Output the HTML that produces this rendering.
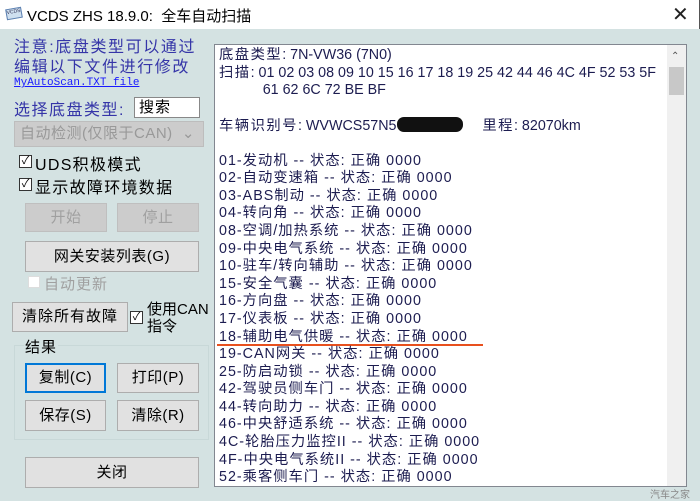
<!DOCTYPE html>
<html><head><meta charset="utf-8"><style>
*{margin:0;padding:0;box-sizing:border-box}
body{width:700px;height:501px;overflow:hidden;background:#d4e2e2;font-family:"Liberation Sans","Noto Sans CJK SC",sans-serif;position:relative}
.a{position:absolute;white-space:nowrap}
#tb{left:0;top:0;width:700px;height:29px;background:#fff;border-right:1px solid #555}
.btn{position:absolute;background:#e1e1e1;border:1px solid #adadad;font-size:15px;color:#000;text-align:center;letter-spacing:0.5px}
.dis{color:#a0a0a0;background:#cccccc;border-color:#bfbfbf}
.cb{position:absolute;width:13px;height:13px;border:1px solid #333;background:#fff;font-size:11px;line-height:11px;text-align:center}
#box{left:214px;top:44px;width:473px;height:443px;background:#fff;border:1px solid #828790}
#txt{position:absolute;left:4px;top:2px;font-size:14.3px;line-height:17.6px;color:#1c1c50}
#txt div{height:17.6px}
#txt .l{letter-spacing:1px}
.c{letter-spacing:1.5px}
</style></head><body>
<div id="tb" class="a"></div>
<div class="a" style="left:6px;top:8px;width:16px;height:11px;background:#cfe0f0;border:1px solid #5b7fb0;transform:rotate(-10deg);font-size:5px;color:#335">VCDS</div>
<div class="a" style="left:27px;top:5px;font-size:15px;color:#000">VCDS ZHS 18.9.0:&nbsp; 全车自动扫描</div>
<div class="a" style="left:672px;top:2px;font-size:20px;color:#222">✕</div>

<div class="a" style="left:14px;top:38px;font-size:16px;line-height:20px;color:#3535a8;letter-spacing:1.6px">注意:底盘类型可以通过<br>编辑以下文件进行修改</div>
<div class="a" style="left:14px;top:77px;font-size:11px;color:#1a1aff;text-decoration:underline;font-family:'Liberation Mono',monospace">MyAutoScan.TXT file</div>
<div class="a" style="left:14px;top:96px;font-size:16px;color:#3535a8;letter-spacing:1.5px">选择底盘类型:</div>
<div class="a" style="left:134px;top:97px;width:66px;height:21px;background:#fff;border:1px solid #888;font-size:15px;padding-left:4px;line-height:19px;letter-spacing:1px">搜索</div>
<div class="a" style="left:14px;top:121px;width:190px;height:26px;background:#cccccc;border:1px solid #bdbdbd;font-size:15px;color:#999;padding-left:5px;line-height:24px;letter-spacing:0.5px">自动检测(仅限于CAN)<span style="position:absolute;right:8px">⌄</span></div>
<div class="cb" style="left:19px;top:155px">✓</div><div class="a" style="left:35px;top:151px;font-size:16px;letter-spacing:1.3px">UDS积极模式</div>
<div class="cb" style="left:19px;top:178px">✓</div><div class="a" style="left:35px;top:174px;font-size:16px;letter-spacing:1.3px">显示故障环境数据</div>
<div class="btn dis" style="left:25px;top:203px;width:82px;height:29px;line-height:27px">开始</div>
<div class="btn dis" style="left:117px;top:203px;width:82px;height:29px;line-height:27px">停止</div>
<div class="btn" style="left:25px;top:241px;width:174px;height:31px;line-height:29px">网关安装列表(G)</div>
<div class="a" style="left:28px;top:276px;width:12px;height:12px;background:#fff;border:1px solid #ddd"></div>
<div class="a" style="left:44px;top:273px;font-size:15px;color:#a0a0a0;letter-spacing:1px">自动更新</div>
<div class="btn" style="left:12px;top:302px;width:116px;height:30px;line-height:28px;letter-spacing:1px">清除所有故障</div>
<div class="cb" style="left:130px;top:311px">✓</div>
<div class="a" style="left:147px;top:301px;font-size:15px;line-height:17px">使用CAN<br>指令</div>
<div class="a" style="left:14px;top:345px;width:195px;height:95px;border:1px solid #c8d8d8"></div>
<div class="a" style="left:24px;top:336px;font-size:15px;background:#d4e2e2;padding:0 1px;letter-spacing:1px">结果</div>
<div class="btn" style="left:25px;top:363px;width:81px;height:30px;line-height:26px;border:2px solid #0078d7">复制(C)</div>
<div class="btn" style="left:117px;top:363px;width:82px;height:30px;line-height:28px">打印(P)</div>
<div class="btn" style="left:25px;top:400px;width:81px;height:31px;line-height:29px">保存(S)</div>
<div class="btn" style="left:117px;top:400px;width:82px;height:31px;line-height:29px">清除(R)</div>
<div class="btn" style="left:25px;top:457px;width:174px;height:31px;line-height:29px">关闭</div>

<div id="box" class="a">
<div id="txt">
<div><span class="c">底盘类型</span>: 7N-VW36 (7N0)</div>
<div><span class="c">扫描</span>: 01 02 03 08 09 10 15 16 17 18 19 25 42 44 46 4C 4F 52 53 5F</div>
<div>&nbsp;&nbsp;&nbsp;&nbsp;&nbsp;&nbsp;&nbsp;&nbsp;&nbsp;&nbsp;&nbsp;61 62 6C 72 BE BF</div>
<div></div>
<div><span class="c">车辆识别号</span>: WVWCS57N5<span style="display:inline-block;width:66px;height:15px;background:#111;border-radius:7px;vertical-align:-2px"></span>&nbsp;&nbsp;&nbsp;&nbsp; <span class="c">里程</span>: 82070km</div>
<div></div>
<div class="l">01-发动机 -- 状态: 正确 0000</div>
<div class="l">02-自动变速箱 -- 状态: 正确 0000</div>
<div class="l">03-ABS制动 -- 状态: 正确 0000</div>
<div class="l">04-转向角 -- 状态: 正确 0000</div>
<div class="l">08-空调/加热系统 -- 状态: 正确 0000</div>
<div class="l">09-中央电气系统 -- 状态: 正确 0000</div>
<div class="l">10-驻车/转向辅助 -- 状态: 正确 0000</div>
<div class="l">15-安全气囊 -- 状态: 正确 0000</div>
<div class="l">16-方向盘 -- 状态: 正确 0000</div>
<div class="l">17-仪表板 -- 状态: 正确 0000</div>
<div class="l" style="border-bottom:2px solid #e8501e;width:266px;margin-left:-2px;padding-left:2px">18-辅助电气供暖 -- 状态: 正确 0000</div>
<div class="l">19-CAN网关 -- 状态: 正确 0000</div>
<div class="l">25-防启动锁 -- 状态: 正确 0000</div>
<div class="l">42-驾驶员侧车门 -- 状态: 正确 0000</div>
<div class="l">44-转向助力 -- 状态: 正确 0000</div>
<div class="l">46-中央舒适系统 -- 状态: 正确 0000</div>
<div class="l">4C-轮胎压力监控II -- 状态: 正确 0000</div>
<div class="l">4F-中央电气系统II -- 状态: 正确 0000</div>
<div class="l">52-乘客侧车门 -- 状态: 正确 0000</div>
</div>
<div class="a" style="left:452px;top:0;width:19px;height:441px;background:#f0f0f0"></div>
<div class="a" style="left:456px;top:6px;font-size:10px;color:#555">⌃</div>
<div class="a" style="left:454px;top:22px;width:15px;height:28px;background:#c8c8c8"></div>
</div>
<div class="a" style="left:650px;top:486px;font-size:10px;color:#888">汽车之家</div>
</body></html>
